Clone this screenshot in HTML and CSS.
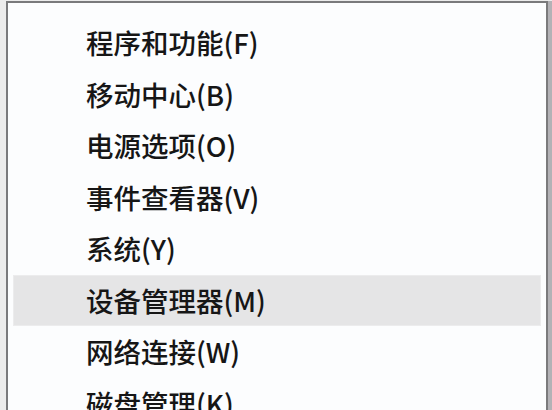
FILE: index.html
```html
<!DOCTYPE html>
<html lang="zh-CN">
<head>
<meta charset="utf-8">
<link rel="stylesheet" href="styles.css">
</head>
<body>
<div class="screen">
  <div class="menu">
    <div class="item">程序和功能(F)</div>
    <div class="item">移动中心(B)</div>
    <div class="item">电源选项(O)</div>
    <div class="item">事件查看器(V)</div>
    <div class="item">系统(Y)</div>
    <div class="item active">设备管理器(M)</div>
    <div class="item">网络连接(W)</div>
    <div class="item">磁盘管理(K)</div>
  </div>
  <div class="edge"></div>
</div>
</body>
</html>
```
FILE: styles.css
```css
html, body {
  margin: 0;
  padding: 0;
  width: 552px;
  height: 410px;
  overflow: hidden;
  background: #ececec;
}
.screen {
  display: flex;
  align-items: flex-start;
  padding: 1px 0 0 6px;
  height: 410px;
  box-sizing: border-box;
  overflow: hidden;
}
.menu {
  flex: none;
  width: 542px;
  height: 420px;
  box-sizing: border-box;
  background: #fcfdfe;
  border: 2px solid #7a7a7c;
  border-bottom: none;
  padding: 14px 5px 0 5px;
  display: flex;
  flex-direction: column;
  font-family: "Noto Sans CJK SC", "Noto Sans", sans-serif;
  font-size: 27.5px;
  font-weight: 500;
  color: #161616;
}
.edge {
  flex: 1;
  align-self: stretch;
  background: #b3b2b6;
}
.item {
  flex: none;
  height: 51.5px;
  line-height: 50px;
  padding-left: 73px;
  box-sizing: border-box;
  white-space: nowrap;
}
.item.active {
  background: #e5e5e6;
  border: 1px solid #ececed;
  line-height: 48px;
  padding-left: 72px;
}
```
